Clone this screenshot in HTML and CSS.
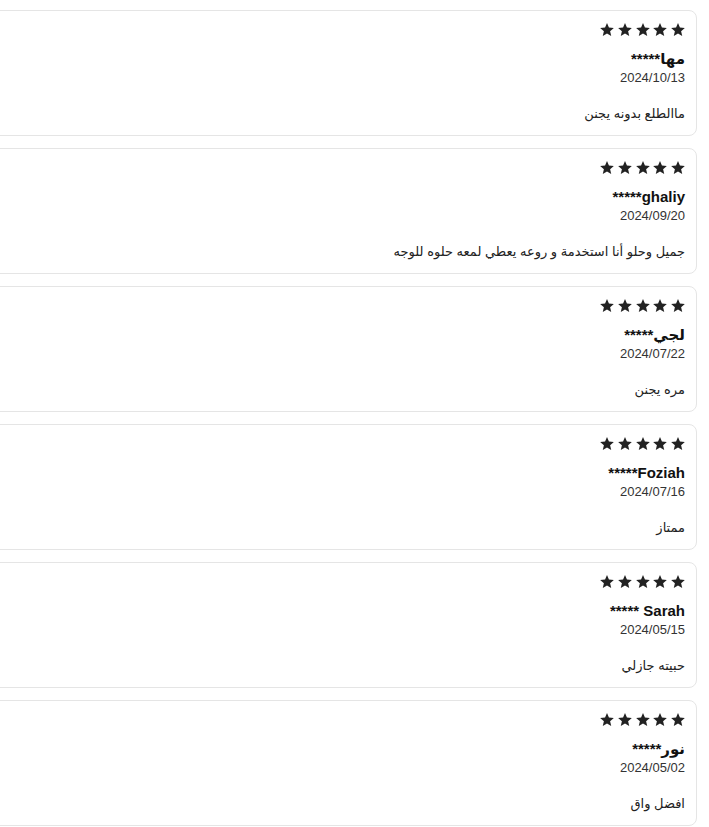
FILE: index.html
```html
<!DOCTYPE html>
<html lang="ar" dir="rtl">
<head>
    <meta charset="UTF-8">
    <meta name="viewport" content="width=device-width, initial-scale=1.0">
    <title>التقييمات</title>
    <link rel="stylesheet" href="styles.css">
</head>
<body>
    <svg width="0" height="0" class="defs">
        <symbol id="star" viewBox="2 2 20 19">
            <path d="M12 17.27L18.18 21l-1.64-7.03L22 9.24l-7.19-.61L12 2 9.19 8.63 2 9.24l5.46 4.73L5.82 21z"/>
        </symbol>
    </svg>

    <div class="reviews">
        <div class="review">
            <div class="stars">
                <svg><use href="#star"/></svg><svg><use href="#star"/></svg><svg><use href="#star"/></svg><svg><use href="#star"/></svg><svg><use href="#star"/></svg>
            </div>
            <div class="name">مها*****</div>
            <div class="date">2024/10/13</div>
            <p class="text">ماالطلع بدونه يجنن</p>
        </div>

        <div class="review">
            <div class="stars">
                <svg><use href="#star"/></svg><svg><use href="#star"/></svg><svg><use href="#star"/></svg><svg><use href="#star"/></svg><svg><use href="#star"/></svg>
            </div>
            <div class="name">ghaliy*****</div>
            <div class="date">2024/09/20</div>
            <p class="text">جميل وحلو أنا استخدمة و روعه يعطي لمعه حلوه للوجه</p>
        </div>

        <div class="review">
            <div class="stars">
                <svg><use href="#star"/></svg><svg><use href="#star"/></svg><svg><use href="#star"/></svg><svg><use href="#star"/></svg><svg><use href="#star"/></svg>
            </div>
            <div class="name">لجي*****</div>
            <div class="date">2024/07/22</div>
            <p class="text">مره يجنن</p>
        </div>

        <div class="review">
            <div class="stars">
                <svg><use href="#star"/></svg><svg><use href="#star"/></svg><svg><use href="#star"/></svg><svg><use href="#star"/></svg><svg><use href="#star"/></svg>
            </div>
            <div class="name">Foziah*****</div>
            <div class="date">2024/07/16</div>
            <p class="text">ممتاز</p>
        </div>

        <div class="review">
            <div class="stars">
                <svg><use href="#star"/></svg><svg><use href="#star"/></svg><svg><use href="#star"/></svg><svg><use href="#star"/></svg><svg><use href="#star"/></svg>
            </div>
            <div class="name">Sarah *****</div>
            <div class="date">2024/05/15</div>
            <p class="text">حبيته جازلي</p>
        </div>

        <div class="review">
            <div class="stars">
                <svg><use href="#star"/></svg><svg><use href="#star"/></svg><svg><use href="#star"/></svg><svg><use href="#star"/></svg><svg><use href="#star"/></svg>
            </div>
            <div class="name">نور*****</div>
            <div class="date">2024/05/02</div>
            <p class="text">افضل واق</p>
        </div>
    </div>
</body>
</html>
```

FILE: styles.css
```css
body {
    margin: 0;
    font-family: "Liberation Sans", "DejaVu Sans", sans-serif;
    background-color: #fff;
    color: #222;
    overflow: hidden;
}
.defs {
    position: absolute;
}
.reviews {
    display: flex;
    flex-direction: column;
    gap: 12px;
    padding-top: 10px;
    margin-right: 12px;
    margin-left: -20px;
}
.review {
    height: 126px;
    box-sizing: border-box;
    padding: 12px 11px 12px;
    border: 1px solid #e5e5e5;
    border-radius: 8px;
}
.stars {
    display: flex;
    gap: 3.7px;
    height: 13px;
}
.stars svg {
    width: 14px;
    height: 13px;
    fill: #222;
}
.name {
    margin-top: 13px;
    font-size: 15px;
    line-height: 20px;
    font-weight: 700;
    color: #111;
}
.date {
    font-size: 13px;
    line-height: 18px;
    color: #333;
}
.text {
    margin: 17px 0 0;
    font-size: 13px;
    line-height: 20px;
    color: #222;
}
```
